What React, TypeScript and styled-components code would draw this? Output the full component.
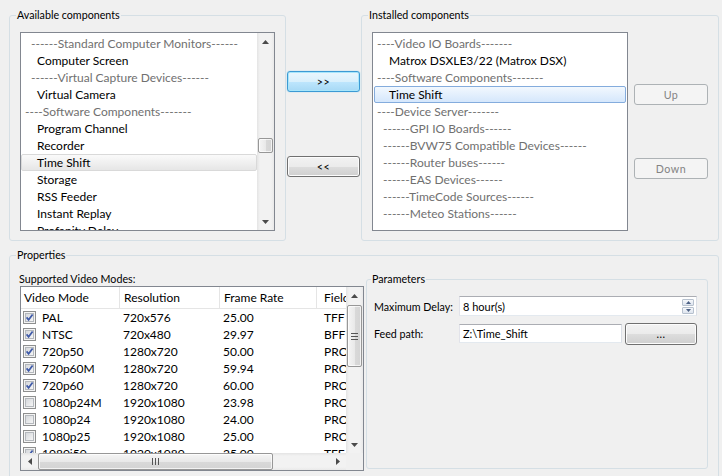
import React from 'react';
import styled, { createGlobalStyle, css } from 'styled-components';

const GlobalStyle = createGlobalStyle`
  html, body {
    margin: 0;
    padding: 0;
    background: #f0f0f0;
    overflow: hidden;
  }
  body {
    font-family: Lato, "Open Sans", sans-serif;
    color: #000;
  }
`;

const LABEL_SIZE = '10.7px';
const CONTENT_SIZE = '12px';

type Entry = { text: string; level: number; sep?: boolean; selected?: boolean };

const available: Entry[] = [
  { text: '------Standard Computer Monitors------', level: 1, sep: true },
  { text: 'Computer Screen', level: 2 },
  { text: '------Virtual Capture Devices------', level: 1, sep: true },
  { text: 'Virtual Camera', level: 2 },
  { text: '----Software Components-------', level: 0, sep: true },
  { text: 'Program Channel', level: 2 },
  { text: 'Recorder', level: 2 },
  { text: 'Time Shift', level: 2, selected: true },
  { text: 'Storage', level: 2 },
  { text: 'RSS Feeder', level: 2 },
  { text: 'Instant Replay', level: 2 },
  { text: 'Profanity Delay', level: 2 },
];

const installed: Entry[] = [
  { text: '----Video IO Boards-------', level: 0, sep: true },
  { text: 'Matrox DSXLE3/22 (Matrox DSX)', level: 2 },
  { text: '----Software Components-------', level: 0, sep: true },
  { text: 'Time Shift', level: 2, selected: true },
  { text: '----Device Server-------', level: 0, sep: true },
  { text: '------GPI IO Boards------', level: 1, sep: true },
  { text: '------BVW75 Compatible Devices------', level: 1, sep: true },
  { text: '------Router buses------', level: 1, sep: true },
  { text: '------EAS Devices------', level: 1, sep: true },
  { text: '------TimeCode Sources------', level: 1, sep: true },
  { text: '------Meteo Stations------', level: 1, sep: true },
];

type Mode = { name: string; res: string; rate: string; field: string; on: boolean };

const modes: Mode[] = [
  { name: 'PAL', res: '720x576', rate: '25.00', field: 'TFF', on: true },
  { name: 'NTSC', res: '720x480', rate: '29.97', field: 'BFF', on: true },
  { name: '720p50', res: '1280x720', rate: '50.00', field: 'PRO', on: true },
  { name: '720p60M', res: '1280x720', rate: '59.94', field: 'PRO', on: true },
  { name: '720p60', res: '1280x720', rate: '60.00', field: 'PRO', on: true },
  { name: '1080p24M', res: '1920x1080', rate: '23.98', field: 'PRO', on: false },
  { name: '1080p24', res: '1920x1080', rate: '24.00', field: 'PRO', on: false },
  { name: '1080p25', res: '1920x1080', rate: '25.00', field: 'PRO', on: false },
  { name: '1080i50', res: '1920x1080', rate: '25.00', field: 'TFF', on: true },
];

/* ---------- layout ---------- */

const Window = styled.div`
  width: 722px;
  height: 476px;
  box-sizing: border-box;
  padding: 7px 3px 0 9px;
  display: flex;
  flex-direction: column;
  gap: 6px;
  overflow: hidden;
`;

const TopRow = styled.div`
  display: flex;
  gap: 1px;
`;

const GroupBox = styled.fieldset<{ $width: number; $height?: number }>`
  margin: 0;
  padding: 0;
  min-width: 0;
  box-sizing: border-box;
  width: ${(p) => p.$width}px;
  ${(p) => p.$height && css`height: ${p.$height}px;`}
  border: 1px solid #d5dfe5;
  border-radius: 3px;
  flex: none;
`;

const Legend = styled.legend<{ $offset?: number }>`
  margin-left: ${(p) => p.$offset ?? 6}px;
  padding: 0 1px;
  font-size: ${LABEL_SIZE};
  line-height: 16px;
`;

const GroupBody = styled.div`
  display: flex;
  padding: 9px 10px 9px 10px;
`;

const MoveColumn = styled.div`
  width: 73px;
  flex: none;
  display: flex;
  flex-direction: column;
  padding-top: 64px;
  gap: 64px;
`;

const SideColumn = styled.div`
  width: 74px;
  flex: none;
  margin-left: 6px;
  display: flex;
  flex-direction: column;
  padding-top: 52px;
  gap: 53px;
`;

/* ---------- list boxes ---------- */

const ListBox = styled.div<{ $width: number }>`
  width: ${(p) => p.$width}px;
  height: 199px;
  box-sizing: border-box;
  border: 1px solid #828790;
  background: #fff;
  display: flex;
  flex: none;
`;

const ListItems = styled.div`
  flex: 1;
  min-width: 0;
  overflow: hidden;
  padding-top: 2px;
`;

const ListRow = styled.div<{ $level: number; $sep?: boolean; $inset: number; $sel?: 'focus' | 'blur' }>`
  height: 17px;
  box-sizing: border-box;
  margin: 0 ${(p) => p.$inset}px;
  padding-left: ${(p) => 3 - p.$inset + p.$level * 6}px;
  border: 1px solid transparent;
  border-radius: 2px;
  font-size: ${CONTENT_SIZE};
  line-height: 15px;
  white-space: nowrap;
  color: ${(p) => (p.$sep ? '#707070' : '#000')};
  ${(p) =>
    p.$sel === 'blur' &&
    css`
      border-color: #d9d9d9;
      background: linear-gradient(#fafafa, #e6e6e6);
    `}
  ${(p) =>
    p.$sel === 'focus' &&
    css`
      border-color: #84acdd;
      background: linear-gradient(#f2f8fe, #d5e7fc);
    `}
`;

/* ---------- scroll bars ---------- */

const VBar = styled.div<{ $height?: number }>`
  width: 17px;
  flex: none;
  display: flex;
  flex-direction: column;
  background: linear-gradient(to right, #e4e4e4 0, #f2f2f2 3px, #f2f2f2 14px, #e9e9e9 100%);
`;

const HBar = styled.div`
  height: 17px;
  display: flex;
  background: linear-gradient(#e4e4e4 0, #f2f2f2 3px, #f2f2f2 14px, #e9e9e9 100%);
`;

const ArrowCell = styled.div`
  flex: none;
  width: 17px;
  height: 17px;
  display: flex;
  align-items: center;
  justify-content: center;
`;

const Track = styled.div<{ $horizontal?: boolean }>`
  flex: 1;
  display: flex;
  flex-direction: ${(p) => (p.$horizontal ? 'row' : 'column')};
  min-width: 0;
  min-height: 0;
`;

const Thumb = styled.div<{ $offset: number; $size: number; $horizontal?: boolean }>`
  flex: none;
  box-sizing: border-box;
  border: 1px solid #979797;
  border-radius: 2px;
  display: flex;
  align-items: center;
  justify-content: center;
  ${(p) =>
    p.$horizontal
      ? css`
          margin-left: ${p.$offset}px;
          width: ${p.$size}px;
          height: 17px;
          background: linear-gradient(#f5f5f5, #e9e9e9 50%, #d9d9d9 51%, #d4d4d4);
        `
      : css`
          margin: ${p.$offset}px 0 0 1px;
          height: ${p.$size}px;
          width: 15px;
          background: linear-gradient(to right, #f5f5f5, #e9e9e9 50%, #d9d9d9 51%, #d4d4d4);
        `}
  box-shadow: inset 0 0 0 1px rgba(255, 255, 255, 0.7);
`;

const Corner = styled.div`
  background: #f0f0f0;
`;

const Arrow = ({ dir }: { dir: 'up' | 'down' | 'left' | 'right' }) => {
  const pts = {
    up: '0,4 3.5,0 7,4',
    down: '0,0 7,0 3.5,4',
    left: '4,0 4,7 0,3.5',
    right: '0,0 4,3.5 0,7',
  }[dir];
  const vertical = dir === 'up' || dir === 'down';
  return (
    <svg width={vertical ? 7 : 4} height={vertical ? 4 : 7} viewBox={vertical ? '0 0 7 4' : '0 0 4 7'}>
      <polygon points={pts} fill="#4a4a4a" />
    </svg>
  );
};

const Grip = ({ horizontal }: { horizontal?: boolean }) =>
  horizontal ? (
    <svg width="7" height="7" viewBox="0 0 7 7">
      {[0.5, 3.5, 6.5].map((x) => (
        <line key={x} x1={x} y1="0" x2={x} y2="7" stroke="#555" strokeWidth="1" />
      ))}
    </svg>
  ) : (
    <svg width="7" height="7" viewBox="0 0 7 7">
      {[0.5, 3.5, 6.5].map((y) => (
        <line key={y} x1="0" y1={y} x2="7" y2={y} stroke="#555" strokeWidth="1" />
      ))}
    </svg>
  );

const VScroll = ({ offset, size, grip }: { offset: number; size: number; grip?: boolean }) => (
  <VBar>
    <ArrowCell>
      <Arrow dir="up" />
    </ArrowCell>
    <Track>
      <Thumb $offset={offset} $size={size}>
        {grip && <Grip />}
      </Thumb>
    </Track>
    <ArrowCell>
      <Arrow dir="down" />
    </ArrowCell>
  </VBar>
);

const HScroll = ({ offset, size }: { offset: number; size: number }) => (
  <HBar>
    <ArrowCell>
      <Arrow dir="left" />
    </ArrowCell>
    <Track $horizontal>
      <Thumb $horizontal $offset={offset} $size={size}>
        <Grip horizontal />
      </Thumb>
    </Track>
    <ArrowCell>
      <Arrow dir="right" />
    </ArrowCell>
  </HBar>
);

/* ---------- buttons ---------- */

type Look = 'normal' | 'hot' | 'disabled';

const PushButton = styled.button<{ $look?: Look; $height?: number }>`
  box-sizing: border-box;
  width: 100%;
  height: ${(p) => p.$height ?? 21}px;
  padding: 0;
  font-family: inherit;
  font-size: ${LABEL_SIZE};
  letter-spacing: 0.5px;
  border-radius: 3px;
  border: 1px solid #707070;
  color: #000;
  background: linear-gradient(#f2f2f2, #ebebeb 50%, #dddddd 51%, #cfcfcf);
  box-shadow: inset 0 0 0 1px #fcfcfc;
  ${(p) =>
    p.$look === 'hot' &&
    css`
      border-color: #3c9ad4;
      background: linear-gradient(#eaf6fd, #d9f0fc 50%, #bee6fd 51%, #a7d9f5);
      box-shadow: inset 0 0 0 1px #a8e6fb, 0 0 1px #49c0f0;
    `}
  ${(p) =>
    p.$look === 'disabled' &&
    css`
      border-color: #adb2b5;
      background: #f4f4f4;
      color: #838383;
      box-shadow: none;
    `}
`;

/* ---------- properties ---------- */

const PropsBody = styled.div`
  display: flex;
  align-items: flex-start;
  padding: 9px 10px 0 10px;
`;

const ModesColumn = styled.div`
  width: 344px;
  flex: none;
`;

const FieldLabel = styled.div`
  font-size: ${LABEL_SIZE};
  line-height: 14px;
  margin-left: -1px;
  white-space: nowrap;
`;

const ModesGrid = styled.div`
  width: 344px;
  height: 185px;
  box-sizing: border-box;
  border: 1px solid #828790;
  background: #fff;
  display: grid;
  grid-template-columns: 1fr 17px;
  grid-template-rows: 1fr 17px;
`;

const ModesView = styled.div`
  overflow: hidden;
  min-width: 0;
`;

const COLUMNS = '99px 100px 97px 90px';

const HeaderRow = styled.div`
  display: grid;
  grid-template-columns: ${COLUMNS};
  height: 22px;
  box-sizing: border-box;
  border-bottom: 1px solid #e5e5e5;
`;

const HeaderCell = styled.div<{ $pad: number }>`
  padding-left: ${(p) => p.$pad}px;
  border-right: 1px solid #e5e5e5;
  font-size: ${CONTENT_SIZE};
  line-height: 21px;
  white-space: nowrap;
  overflow: hidden;
`;

const ModeRow = styled.div`
  display: grid;
  grid-template-columns: ${COLUMNS};
  height: 17px;
`;

const ModeCell = styled.div<{ $pad: number }>`
  display: flex;
  align-items: center;
  gap: 6px;
  padding-left: ${(p) => p.$pad}px;
  font-size: ${CONTENT_SIZE};
  line-height: 17px;
  white-space: nowrap;
  overflow: hidden;
`;

const CheckBox = ({ on }: { on: boolean }) => (
  <svg width="13" height="13" viewBox="0 0 13 13" style={{ flex: 'none' }}>
    <defs>
      <linearGradient id="cbfill" x1="0" y1="0" x2="1" y2="1">
        <stop offset="0" stopColor="#d3d6da" />
        <stop offset="1" stopColor="#f7f7f7" />
      </linearGradient>
    </defs>
    <rect x="0.5" y="0.5" width="12" height="12" fill="#f4f4f4" stroke="#8e8f8f" />
    <rect x="2.5" y="2.5" width="8" height="8" fill="url(#cbfill)" stroke="#b4b8bd" />
    {on && <path d="M3.6 6.4 L5.6 8.8 L9.6 3.4" fill="none" stroke="#3f5aa8" strokeWidth="1.7" />}
  </svg>
);

const ParamsBody = styled.div`
  display: grid;
  grid-template-columns: 85px 1fr;
  row-gap: 6px;
  align-items: center;
  padding: 9px 10px 0 7px;
`;

const ParamLabel = styled.div`
  font-size: ${LABEL_SIZE};
  white-space: nowrap;
`;

const TextBox = styled.div<{ $height: number; $width?: number }>`
  box-sizing: border-box;
  height: ${(p) => p.$height}px;
  ${(p) => (p.$width ? css`width: ${p.$width}px; flex: none;` : css`flex: 1;`)}
  display: flex;
  align-items: center;
  justify-content: space-between;
  padding: 0 2px 0 3px;
  border: 1px solid;
  border-color: #abadb3 #dbdfe6 #e3e9ef #e2e3ea;
  background: #fff;
  font-size: 11px;
  white-space: nowrap;
`;

const SpinPair = styled.div`
  display: flex;
  flex-direction: column;
  gap: 1px;
`;

const SpinButton = styled.div`
  width: 12px;
  height: 7px;
  box-sizing: border-box;
  border: 1px solid #b7c1ce;
  border-radius: 1px;
  background: linear-gradient(#f6f8fb, #dde4ee);
  display: flex;
  align-items: center;
  justify-content: center;
`;

const SpinArrow = ({ up }: { up?: boolean }) => (
  <svg width="5" height="3" viewBox="0 0 5 3">
    <polygon points={up ? '0,3 2.5,0 5,3' : '0,0 5,0 2.5,3'} fill="#4d6185" />
  </svg>
);

const PathRow = styled.div`
  display: flex;
  align-items: center;
  gap: 3px;
`;

const ButtonSlot = styled.div`
  width: 72px;
  flex: none;
`;

const headers = [
  { label: 'Video Mode', pad: 3 },
  { label: 'Resolution', pad: 4 },
  { label: 'Frame Rate', pad: 4 },
  { label: 'Field', pad: 7 },
];

const renderRows = (entries: Entry[], inset: number, sel: 'focus' | 'blur') =>
  entries.map((e, i) => (
    <ListRow key={i} $level={e.level} $sep={e.sep} $inset={inset} $sel={e.selected ? sel : undefined}>
      {e.text}
    </ListRow>
  ));

const App = () => (
  <>
    <GlobalStyle />
    <Window>
      <TopRow>
        <GroupBox $width={277}>
          <Legend>Available components</Legend>
          <GroupBody>
            <ListBox $width={255}>
              <ListItems>{renderRows(available, 0, 'blur')}</ListItems>
              <VScroll offset={88} size={15} />
            </ListBox>
          </GroupBody>
        </GroupBox>

        <MoveColumn>
          <PushButton $look="hot">&gt;&gt;</PushButton>
          <PushButton>&lt;&lt;</PushButton>
        </MoveColumn>

        <GroupBox $width={358}>
          <Legend>Installed components</Legend>
          <GroupBody>
            <ListBox $width={256}>
              <ListItems>{renderRows(installed, 1, 'focus')}</ListItems>
            </ListBox>
            <SideColumn>
              <PushButton $look="disabled">Up</PushButton>
              <PushButton $look="disabled">Down</PushButton>
            </SideColumn>
          </GroupBody>
        </GroupBox>
      </TopRow>

      <GroupBox $width={710} $height={240}>
        <Legend>Properties</Legend>
        <PropsBody>
          <ModesColumn>
            <FieldLabel>Supported Video Modes:</FieldLabel>
            <ModesGrid>
              <ModesView>
                <HeaderRow>
                  {headers.map((h) => (
                    <HeaderCell key={h.label} $pad={h.pad}>
                      {h.label}
                    </HeaderCell>
                  ))}
                </HeaderRow>
                {modes.map((m) => (
                  <ModeRow key={m.name}>
                    <ModeCell $pad={2}>
                      <CheckBox on={m.on} />
                      {m.name}
                    </ModeCell>
                    <ModeCell $pad={3}>{m.res}</ModeCell>
                    <ModeCell $pad={3}>{m.rate}</ModeCell>
                    <ModeCell $pad={7}>{m.field}</ModeCell>
                  </ModeRow>
                ))}
              </ModesView>
              <VScroll offset={1} size={62} grip />
              <HScroll offset={0} size={235} />
              <Corner />
            </ModesGrid>
          </ModesColumn>

          <GroupBox $width={342} $height={198} style={{ marginLeft: 2, marginTop: -1 }}>
            <Legend $offset={4}>Parameters</Legend>
            <ParamsBody>
              <ParamLabel>Maximum Delay:</ParamLabel>
              <TextBox $height={20}>
                <span>8 hour(s)</span>
                <SpinPair>
                  <SpinButton>
                    <SpinArrow up />
                  </SpinButton>
                  <SpinButton>
                    <SpinArrow />
                  </SpinButton>
                </SpinPair>
              </TextBox>
              <ParamLabel>Feed path:</ParamLabel>
              <PathRow>
                <TextBox $height={19} $width={163}>
                  <span>Z:\Time_Shift</span>
                </TextBox>
                <ButtonSlot>
                  <PushButton $height={22}>...</PushButton>
                </ButtonSlot>
              </PathRow>
            </ParamsBody>
          </GroupBox>
        </PropsBody>
      </GroupBox>
    </Window>
  </>
);

export default App;
